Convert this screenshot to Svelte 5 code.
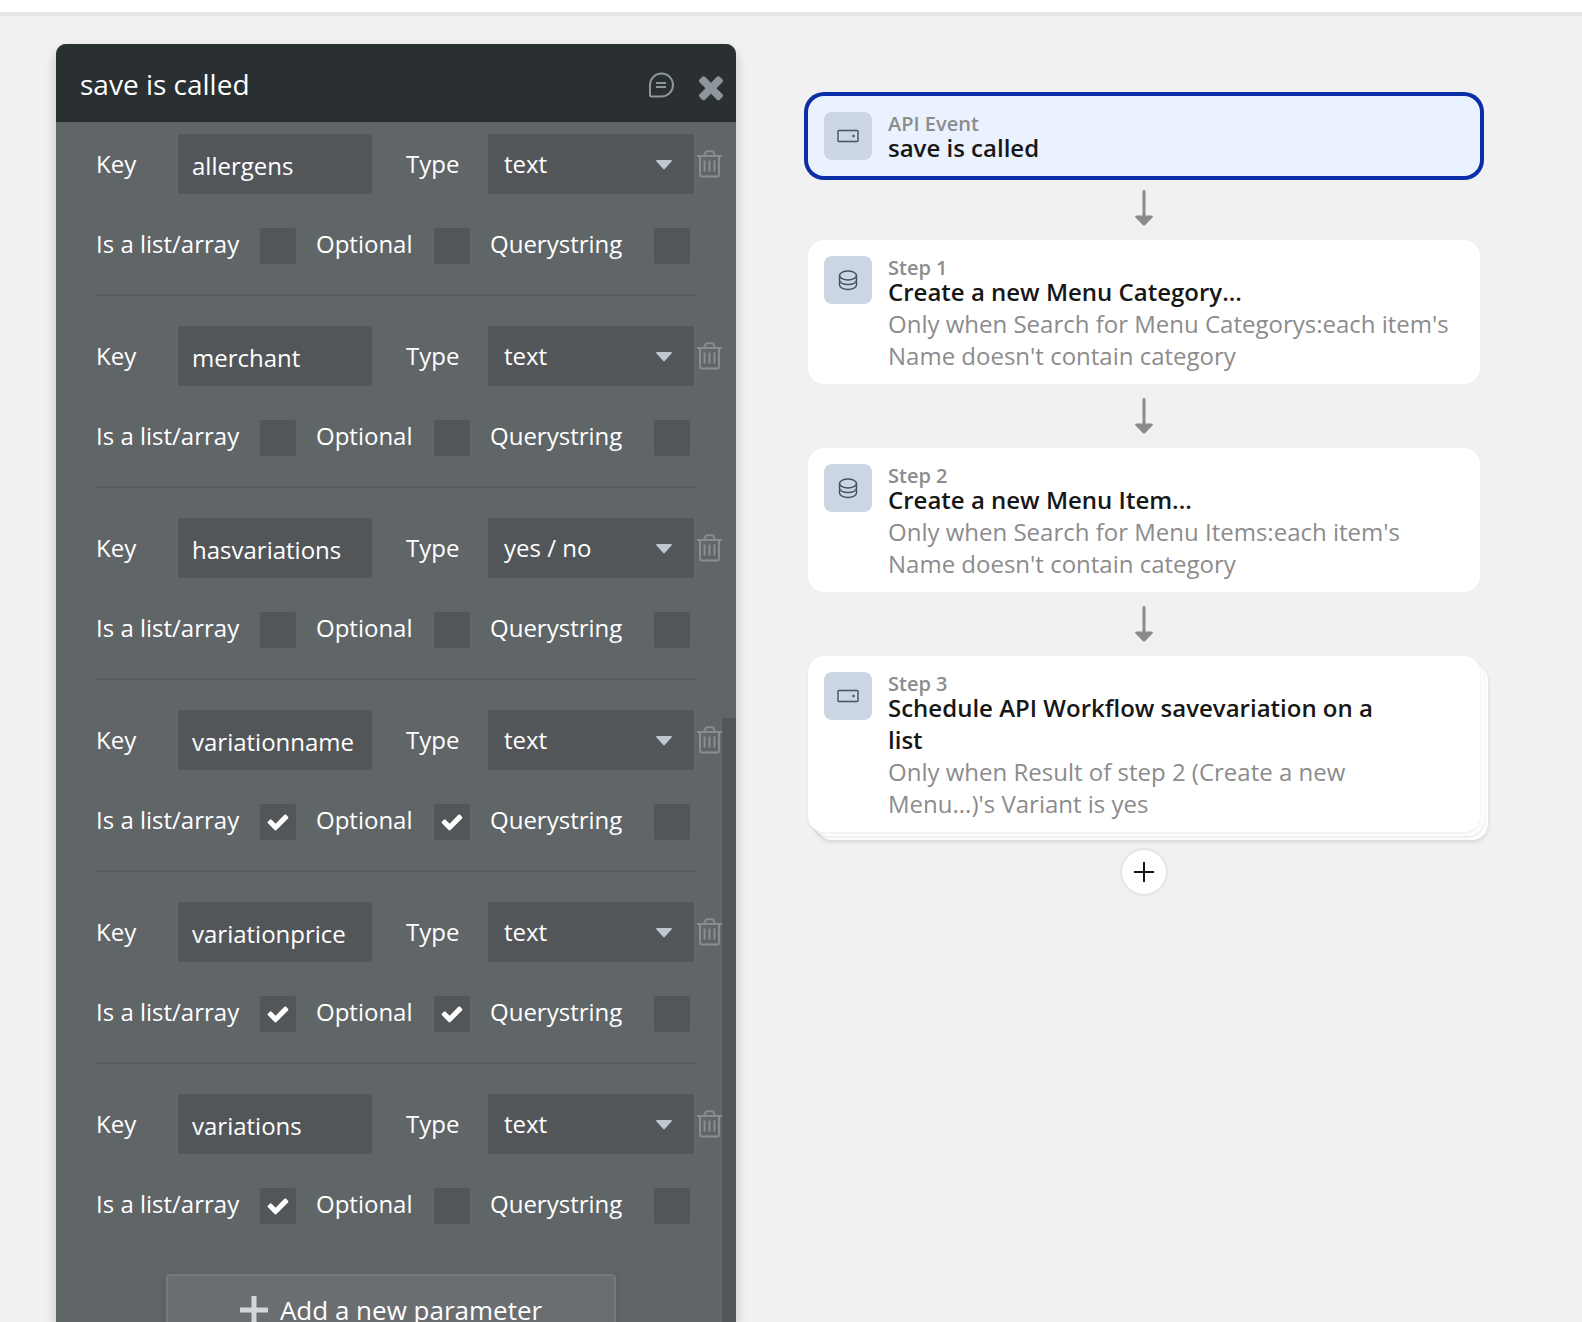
<script lang="ts">
  interface Param {
    key: string;
    type: string;
    list: boolean;
    optional: boolean;
    query: boolean;
  }

  interface Step {
    icon: 'api' | 'data';
    label: string;
    title: string;
    condition?: string;
    selected?: boolean;
    stacked?: boolean;
  }

  const types = ['text', 'number', 'yes / no', 'date'];

  let params: Param[] = $state([
    { key: 'allergens', type: 'text', list: false, optional: false, query: false },
    { key: 'merchant', type: 'text', list: false, optional: false, query: false },
    { key: 'hasvariations', type: 'yes / no', list: false, optional: false, query: false },
    { key: 'variationname', type: 'text', list: true, optional: true, query: false },
    { key: 'variationprice', type: 'text', list: true, optional: true, query: false },
    { key: 'variations', type: 'text', list: true, optional: false, query: false }
  ]);

  const steps: Step[] = [
    { icon: 'api', label: 'API Event', title: 'save is called', selected: true },
    {
      icon: 'data',
      label: 'Step 1',
      title: 'Create a new Menu Category...',
      condition: "Only when Search for Menu Categorys:each item's Name doesn't contain category"
    },
    {
      icon: 'data',
      label: 'Step 2',
      title: 'Create a new Menu Item...',
      condition: "Only when Search for Menu Items:each item's Name doesn't contain category"
    },
    {
      icon: 'api',
      label: 'Step 3',
      title: 'Schedule API Workflow savevariation on a list',
      condition: "Only when Result of step 2 (Create a new Menu...)'s Variant is yes",
      stacked: true
    }
  ];

  function addParam() {
    params.push({ key: '', type: 'text', list: false, optional: false, query: false });
  }

  function removeParam(index: number) {
    params.splice(index, 1);
  }
</script>

{#snippet check()}
  <svg class="check" viewBox="0 0 1792 1792" aria-hidden="true">
    <path d="M1671 566q0 40-28 68l-724 724-136 136q-28 28-68 28t-68-28l-136-136-362-362q-28-28-28-68t28-68l136-136q28-28 68-28t68 28l294 295 656-657q28-28 68-28t68 28l136 136q28 28 28 68z" />
  </svg>
{/snippet}

<div class="page">
  <div class="topbar"></div>

  <main>
    <section class="panel">
      <header>
        <h1>save is called</h1>
        <button class="icon-button" aria-label="Comment">
          <svg class="comment" viewBox="1 -1 26 26">
            <path d="M2 13A11.5 11.5 0 1 1 13.5 24.5H3.2Q2 24.5 2 23.3Z" />
            <path d="M8 11h10M8 15h10" />
          </svg>
        </button>
        <button class="icon-button" aria-label="Close">
          <svg class="close" viewBox="302 -45 1188 1584">
            <path d="M1490 1322q0 40-28 68l-136 136q-28 28-68 28t-68-28l-294-294-294 294q-28 28-68 28t-68-28l-136-136q-28-28-28-68t28-68l294-294-294-294q-28-28-28-68t28-68l136-136q28-28 68-28t68 28l294 294 294-294q28-28 68-28t68 28l136 136q28 28 28 68t-28 68l-294 294 294 294q28 28 28 68z" />
          </svg>
        </button>
      </header>

      <div class="body">
        {#each params as param, i}
          <div class="param">
            <div class="fields">
              <label for="key-{i}">Key</label>
              <input id="key-{i}" class="key" type="text" bind:value={param.key} />
              <label class="type-label" for="type-{i}">Type</label>
              <div class="select">
                <select id="type-{i}" bind:value={param.type}>
                  {#each types as type}
                    <option value={type}>{type}</option>
                  {/each}
                </select>
                <svg class="caret" viewBox="0 0 16 10" aria-hidden="true">
                  <path d="M1 0H15Q16.500 0 15.600 1.300L9 8.800Q8 9.800 7 8.800L0.400 1.300Q-0.500 0 1 0Z" />
                </svg>
              </div>
              <button class="icon-button trash" aria-label="Delete parameter" onclick={() => removeParam(i)}>
                <svg viewBox="0 0 25 28">
                  <path d="M0 6h25M7 5.500 8.600 2.200Q9 1.200 10 1.200h5q1 0 1.400 1L18 5.500M3 6v18.500q0 2 2 2h15q2 0 2-2V6" />
                  <path d="M7.500 10.500v11M12.500 10.500v11M17.500 10.500v11" />
                </svg>
              </button>
            </div>

            <div class="flags">
              <label for="list-{i}">Is a list/array</label>
              <span class="box">
                <input id="list-{i}" type="checkbox" bind:checked={param.list} />
                {#if param.list}{@render check()}{/if}
              </span>
              <label for="optional-{i}">Optional</label>
              <span class="box">
                <input id="optional-{i}" type="checkbox" bind:checked={param.optional} />
                {#if param.optional}{@render check()}{/if}
              </span>
              <label for="query-{i}">Querystring</label>
              <span class="box">
                <input id="query-{i}" type="checkbox" bind:checked={param.query} />
                {#if param.query}{@render check()}{/if}
              </span>
            </div>
          </div>
        {/each}

        <button class="add-param" onclick={addParam}>
          <svg viewBox="0 0 28 28" aria-hidden="true"><path d="M14 0v28M0 14h28" /></svg>
          Add a new parameter
        </button>

        <div class="thumb"></div>
      </div>
    </section>

    <section class="flow">
      {#each steps as step, i}
        {#if i > 0}
          <div class="arrow">
            <svg viewBox="0 0 18 36" aria-hidden="true">
              <path class="line" d="M9 1.500V28" />
              <path d="M1 25.600H17Q18.400 26.200 17.500 27.400L10 35.300Q9 36.200 8 35.300L0.500 27.400Q-0.400 26.200 1 25.600Z" />
            </svg>
          </div>
        {/if}
        <article class="card" class:selected={step.selected} class:stacked={step.stacked}>
          <div class="badge">
            {#if step.icon === 'api'}
              <svg viewBox="0 0 24 24" aria-hidden="true">
                <rect x="2" y="6.500" width="20" height="11" rx="1" />
                <circle cx="17.500" cy="12" r="1.200" />
              </svg>
            {:else}
              <svg viewBox="0 0 24 24" aria-hidden="true">
                <ellipse cx="12" cy="7.500" rx="8.500" ry="4.500" />
                <path d="M3.500 7.500v9.500c0 2.500 3.800 4.500 8.500 4.500s8.500-2 8.500-4.500V7.500" />
                <path d="M3.500 12.200c0 2.500 3.800 4.300 8.500 4.300s8.500-1.800 8.500-4.300" />
              </svg>
            {/if}
          </div>
          <div class="text">
            <p class="label">{step.label}</p>
            <h2>{step.title}</h2>
            {#if step.condition}
              <p class="condition">{step.condition}</p>
            {/if}
          </div>
        </article>
      {/each}

      <button class="add-step" aria-label="Add a step">
        <svg viewBox="0 0 20 20"><path d="M10 0v20M0 10h20" /></svg>
      </button>
    </section>
  </main>
</div>

<style>
  :global(body) {
    background: #f1f1f1;
    overflow: hidden;
  }
  .page {
    display: flex;
    flex-direction: column;
    height: 100vh;
    overflow: hidden;
    background: #f1f1f1;
    font-family: 'Open Sans', 'Noto Sans', sans-serif;
    font-size: 24px;
    line-height: 32px;
  }
  .page * {
    box-sizing: border-box;
  }
  .topbar {
    flex: none;
    height: 16px;
    background: #fff;
    border-bottom: 4px solid #e5e5e5;
  }
  main {
    flex: 1;
    min-height: 0;
    display: grid;
    grid-template-columns: minmax(0, 680fr) minmax(0, 672fr);
    gap: 72px;
    padding: 28px 102px 0 56px;
  }
  h1, h2, p {
    margin: 0;
    font-weight: 400;
  }
  svg {
    display: block;
    overflow: visible;
  }
  button, input, select {
    font: inherit;
    color: inherit;
    margin: 0;
  }
  .icon-button {
    padding: 0;
    border: none;
    background: none;
    cursor: pointer;
  }

  /* Property editor */
  .panel {
    display: flex;
    flex-direction: column;
    min-height: 0;
    color: #fff;
    background: #606567;
    border-radius: 10px 10px 0 0;
    box-shadow: 0 6px 12px rgba(0, 0, 0, 0.2);
  }
  header {
    flex: none;
    display: flex;
    align-items: center;
    height: 78px;
    padding: 2px 13px 0 24px;
    background: #2a2f32;
    border-radius: 10px 10px 0 0;
  }
  h1 {
    flex: 1;
    font-size: 28px;
    line-height: 36px;
  }
  .comment {
    width: 26px;
    height: 26px;
    margin-right: 24px;
    fill: none;
    stroke: #8d969c;
    stroke-width: 2;
  }
  .close {
    width: 24px;
    height: 32px;
    fill: #8d969c;
  }
  .body {
    position: relative;
    flex: 1;
    min-height: 0;
    padding: 12px 14px 0 40px;
    overflow: hidden;
  }
  .param {
    position: relative;
    padding-bottom: 62px;
  }
  .param:not(:nth-last-child(3))::after {
    content: '';
    position: absolute;
    left: 0;
    right: 26px;
    bottom: 30px;
    height: 2px;
    background: #575c5e;
  }
  .fields {
    display: grid;
    grid-template-columns: 82px minmax(0, 194fr) 116px minmax(0, 206fr) 28px;
    align-items: center;
    height: 60px;
  }
  .type-label {
    padding-left: 34px;
  }
  .key {
    width: 100%;
    height: 60px;
    padding: 2px 14px 0;
    border: none;
    border-radius: 2px;
    background: #535659;
    outline: none;
  }
  .select {
    position: relative;
  }
  select {
    display: block;
    appearance: none;
    width: 100%;
    height: 60px;
    padding: 0 40px 0 16px;
    border: none;
    border-radius: 2px;
    background: #535659;
    outline: none;
  }
  .caret {
    position: absolute;
    right: 22px;
    top: 26px;
    width: 16px;
    height: 10px;
    fill: #c0c8cf;
    pointer-events: none;
  }
  .trash {
    justify-self: end;
  }
  .trash svg {
    width: 25px;
    height: 28px;
    fill: none;
    stroke: #898d8f;
    stroke-width: 2;
  }
  .flags {
    display: grid;
    grid-template-columns: 164fr 36px 138fr 36px 184fr 36px;
    align-items: start;
    margin-top: 34px;
    padding-right: 32px;
  }
  .flags label:not(:first-child) {
    padding-left: 20px;
  }
  .box {
    position: relative;
    height: 36px;
  }
  .box input {
    display: block;
    appearance: none;
    width: 36px;
    height: 36px;
    border-radius: 2px;
    background: #535659;
  }
  .check {
    position: absolute;
    inset: 6px;
    width: 24px;
    height: 24px;
    fill: #fff;
    pointer-events: none;
  }
  .add-param {
    display: flex;
    align-items: center;
    justify-content: center;
    gap: 12px;
    width: 450px;
    max-width: 100%;
    height: 72px;
    margin: -12px 0 0 70px;
    font-size: 26px;
    background: #6a6e71;
    border: 2px solid #76797c;
    border-radius: 4px;
    box-shadow: 0 2px 8px rgba(0, 0, 0, 0.1);
    cursor: pointer;
  }
  .add-param svg {
    width: 28px;
    height: 28px;
    stroke: #d5d6d7;
    stroke-width: 5;
  }
  .thumb {
    position: absolute;
    top: 596px;
    right: 0;
    bottom: 0;
    width: 14px;
    background: #535659;
  }

  /* Workflow steps */
  .flow {
    display: flex;
    flex-direction: column;
    padding-top: 52px;
  }
  .card {
    display: flex;
    gap: 16px;
    padding: 16px 28px 12px 16px;
    background: #fff;
    border-radius: 16px;
  }
  .selected {
    background: #ebf2ff;
    box-shadow: 0 0 0 4px #0a2ea8;
  }
  .stacked {
    box-shadow:
      0 1px 3px rgba(0, 0, 0, 0.08),
      4px 4px 0 #fdfdfd,
      4px 5px 3px rgba(0, 0, 0, 0.1),
      8px 8px 0 #fdfdfd,
      8px 10px 4px rgba(0, 0, 0, 0.12);
  }
  .badge {
    flex: none;
    display: grid;
    place-items: center;
    width: 48px;
    height: 48px;
    background: #ccd5e3;
    border-radius: 8px;
  }
  .badge svg {
    width: 24px;
    height: 24px;
    fill: none;
    stroke: #445062;
    stroke-width: 1.4;
  }
  .badge circle {
    fill: #445062;
    stroke: none;
  }
  .text {
    flex: 1;
    min-width: 0;
  }
  .label {
    margin-bottom: -4px;
    font-size: 20px;
    line-height: 24px;
    font-weight: 600;
    color: #8c8c8c;
  }
  h2 {
    padding-right: 48px;
    font-size: 24px;
    font-weight: 600;
    color: #171717;
  }
  .condition {
    color: #8c8c8c;
  }
  .arrow {
    display: grid;
    place-items: center;
    height: 64px;
  }
  .arrow svg {
    width: 18px;
    height: 36px;
    fill: #8a8a8a;
  }
  .line {
    stroke: #8a8a8a;
    stroke-width: 3;
    stroke-linecap: round;
  }
  .add-step {
    display: grid;
    place-items: center;
    align-self: center;
    width: 48px;
    height: 48px;
    margin-top: 16px;
    padding: 0;
    background: #fff;
    background-clip: padding-box;
    border: 2px solid #e6e6e6;
    border-radius: 50%;
    cursor: pointer;
  }
  .add-step svg {
    width: 20px;
    height: 20px;
    stroke: #171717;
    stroke-width: 2;
  }
</style>
